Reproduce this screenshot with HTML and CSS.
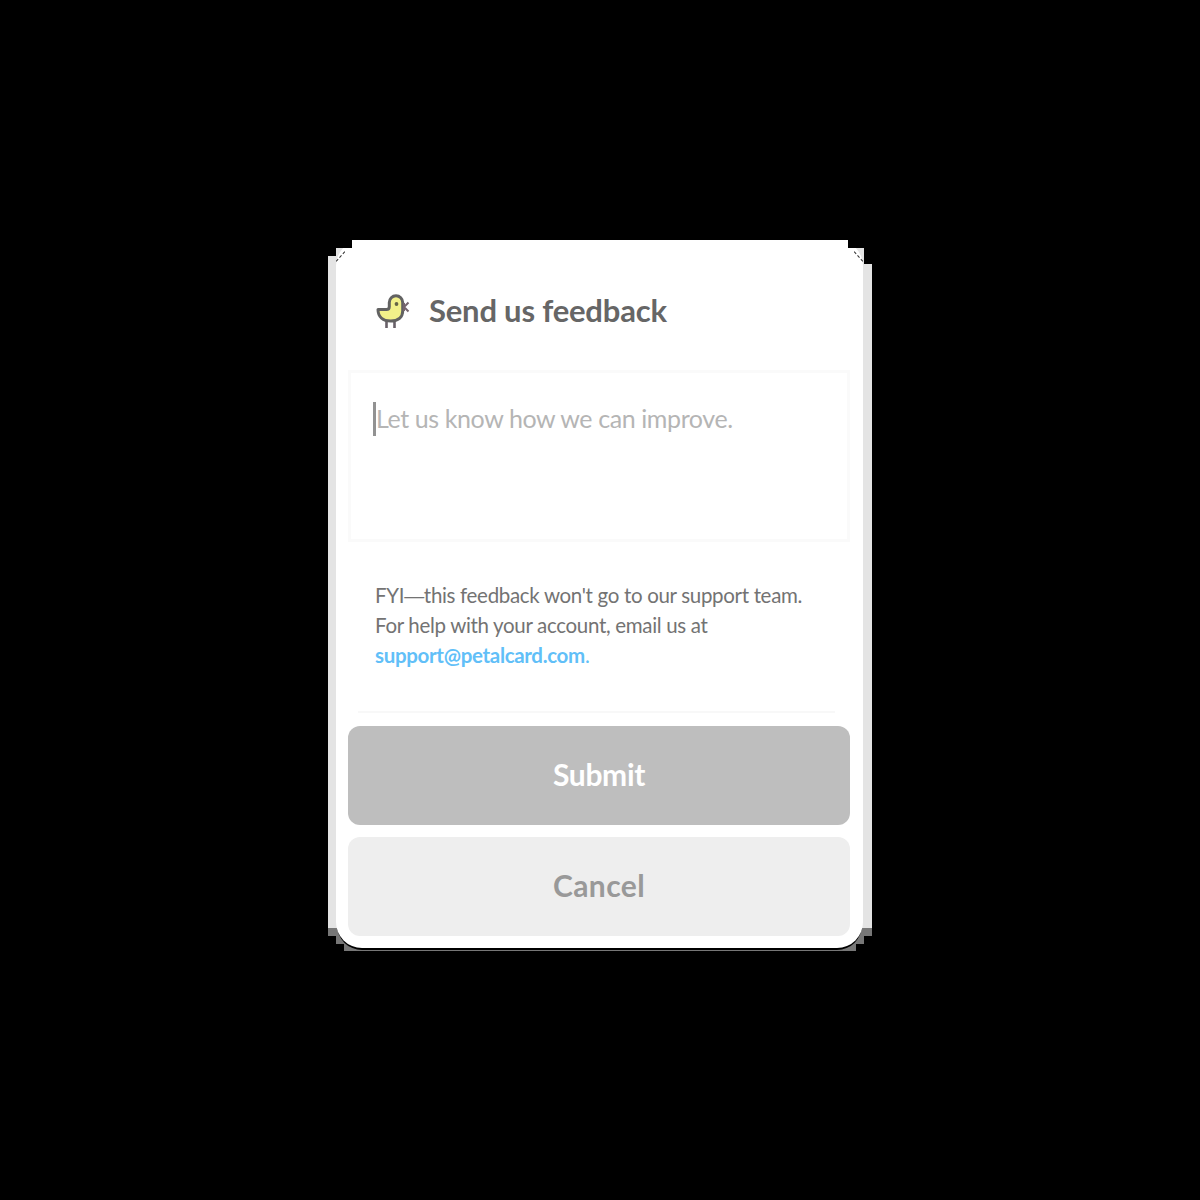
FILE: index.html
```html
<!DOCTYPE html>
<html lang="en">
<head>
<meta charset="utf-8">
<title>Send us feedback</title>
<link rel="stylesheet" href="styles.css">
</head>
<body>
<div class="frame">
  <form class="card">
    <header class="header">
      <svg class="bird" viewBox="0 0 34 36" width="34" height="36" aria-hidden="true">
        <path d="M10.500 27v8M18.500 27v8" fill="none" stroke="#686068" stroke-width="2.6"/>
        <path d="M2 16.500h8.500c2 0 2.800-1 2.800-3V9.500a6.700 6.700 0 0 1 13.400 0V18c0 6-4.500 10-12 10S2 24 2 16.500Z" fill="#f2f18a" stroke="#626262" stroke-width="3" stroke-linejoin="round"/>
        <circle cx="20.500" cy="11" r="1.900" fill="#656545"/>
        <path d="m32.500 9.500-4.500 4.500 4.500 4.500M28 10v8" fill="none" stroke="#75656d" stroke-width="2"/>
      </svg>
      <h1 class="title">Send us feedback</h1>
    </header>
    <div class="field"><span class="caret"></span><span class="placeholder">Let us know how we can improve.</span></div>
    <p class="note">
      <span class="line">FYI<span class="dash">—</span>this feedback won't go to our support team.</span>
      <span class="line">For help with your account, email us at</span>
      <a class="line link"><b>support@petalcard.com</b>.</a>
    </p>
    <div class="rule"></div>
    <button class="button submit" type="button">Submit</button>
    <button class="button cancel" type="button">Cancel</button>
  </form>
</div>
</body>
</html>
```
FILE: styles.css
```css
* { box-sizing: border-box; }
body {
  margin: 0;
  height: 1200px;
  padding-top: 240px;
  background: #000;
  font-family: Lato, "Open Sans", sans-serif;
}
.frame {
  position: relative;
  width: 544px;
  height: 712px;
  margin-left: 328px;
  padding: 0 8px;
  background: linear-gradient(#fff 0 8px, #e4e4e4 8px 688px, #777 688px);
  clip-path: polygon(24px 0, 520px 0, 520px 8px, 536px 8px, 536px 24px, 544px 24px, 544px 696px, 536px 696px, 536px 704px, 528px 704px, 528px 711px, 16px 711px, 16px 704px, 8px 704px, 8px 696px, 0 696px, 0 16px, 8px 16px, 8px 8px, 24px 8px);
}
/* Broken dark outline across the two top corners */
.frame::before,
.frame::after {
  content: "";
  position: absolute;
  top: 16px;
  left: 6px;
  width: 13px;
  border-top: 1px dashed #333;
  transform: rotate(-48deg);
}
.frame::after {
  left: auto;
  right: 7px;
  transform: rotate(48deg);
}
.card {
  display: flex;
  flex-direction: column;
  width: 527px;
  height: 708px;
  padding: 0 13px 12px 12px;
  border-radius: 26px;
  background: #fff;
  box-shadow: 0 3px 0 -1px #000;
}
.header {
  display: flex;
  align-items: flex-start;
  gap: 19px;
  height: 130px;
  padding: 53px 0 0 28px;
}
.bird { flex: none; }
.title {
  margin: -2px 0 0;
  color: #666;
  font-size: 31px;
  line-height: 38px;
  font-weight: 700;
  letter-spacing: -0.2px;
  white-space: nowrap;
}
.field {
  display: flex;
  align-items: flex-start;
  height: 172px;
  padding: 29px 0 0 22px;
  border: 3px solid #fafafa;
}
.caret { width: 3px; height: 34px; background: #929292; }
.placeholder {
  margin-top: -1px;
  color: #b5b5b5;
  font-size: 25px;
  line-height: 34px;
  letter-spacing: -0.4px;
  white-space: nowrap;
}
.note {
  display: flex;
  flex-direction: column;
  align-items: flex-start;
  height: 169px;
  margin: 0;
  padding: 38px 0 0 27px;
  color: #737373;
  font-size: 20.5px;
  line-height: 30px;
  letter-spacing: -0.32px;
  white-space: nowrap;
}
.line { height: 30px; }
.dash { font-family: "Liberation Sans", sans-serif; font-size: 20px; }
.link { color: #61bff8; }
.rule { height: 2px; margin: 0 15px 13px 10px; background: #f8f8f8; }
.button {
  flex: none;
  width: 502px;
  height: 99px;
  margin: 0;
  padding: 0 0 2px;
  border: 0;
  border-radius: 12px;
  font: 700 30px/97px Lato, sans-serif;
}
.submit { background: #bebebe; color: #fff; letter-spacing: -0.3px; }
.cancel { margin-top: 12px; background: #eee; color: #999; letter-spacing: 0.4px; }
```
